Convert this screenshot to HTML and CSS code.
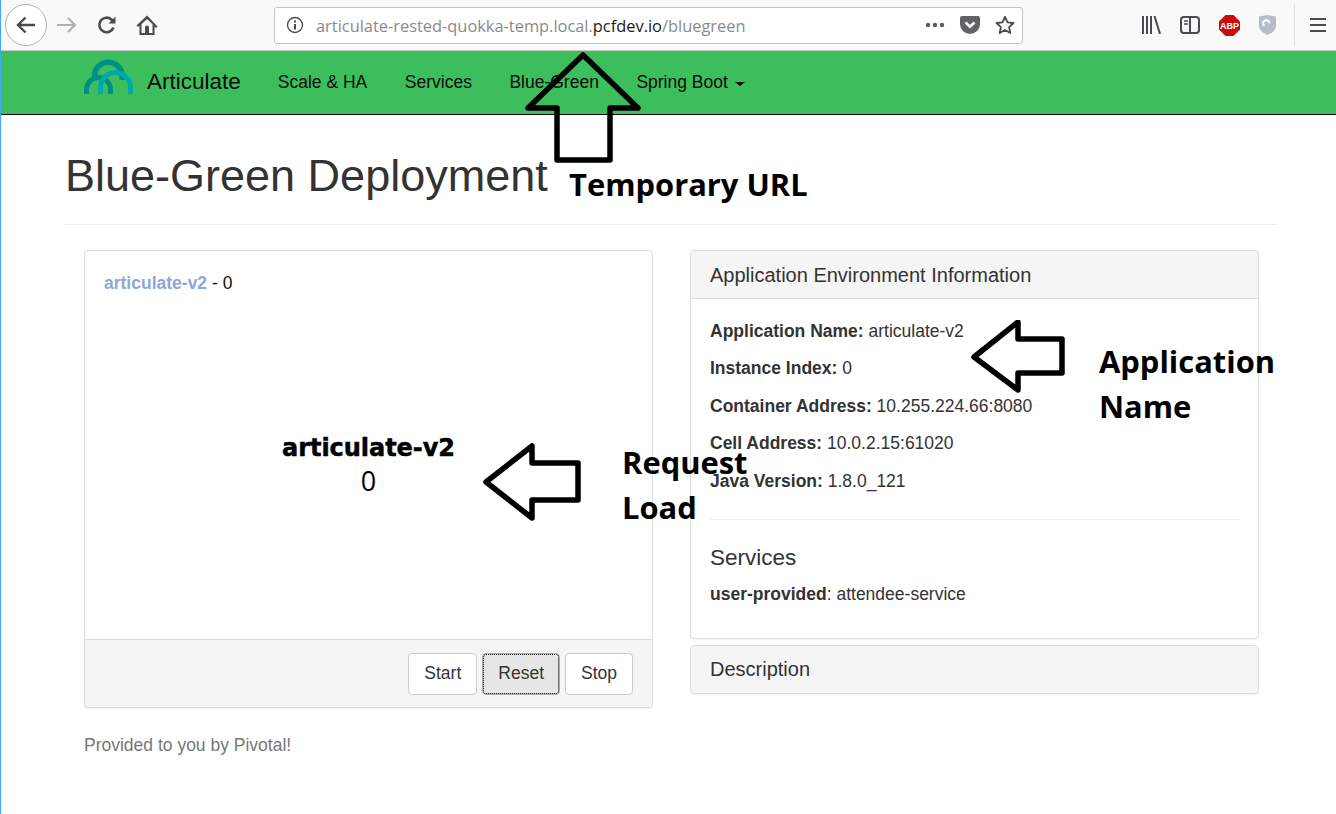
FILE: index.html
```html
<!DOCTYPE html>
<html lang="en">
<head>
  <meta charset="UTF-8" />
  <title>Articulate - Blue-Green Deployment</title>
  <link rel="stylesheet" href="styles.css">
</head>
<body>
  <div class="toolbar">
    <div class="tool-group">
      <div class="back-btn">
        <svg width="22" height="22" viewBox="0 0 22 22"><path d="M20 11H3M10.500 3.500L3 11l7.500 7.500" fill="none" stroke="#4a4a4f" stroke-width="2.400"/></svg>
      </div>
      <svg class="tool-forward" width="22" height="20" viewBox="0 0 22 20"><path d="M1 10h18M12 3l7 7-7 7" fill="none" stroke="#b1b1b3" stroke-width="2.200"/></svg>
      <svg class="tool-reload" width="22" height="22" viewBox="0 0 22 22"><path d="M17.500 13.500A7.300 7.300 0 1 1 15.500 5.500L18 8" fill="none" stroke="#4a4a4f" stroke-width="2.600"/><path d="M19.500 2.500V9.500H12.500Z" fill="#4a4a4f"/></svg>
      <svg class="tool-home" width="22" height="22" viewBox="0 0 22 22"><path fill-rule="evenodd" d="M11 1.500L.5 11.500l1.500 1.500 1.500-1.300V21h15v-8.300l1.500 1.300 1.500-1.500zM9 19v-5.500a2 2 0 0 1 4 0V19h3.500v-8.700L11 5 5.500 10.300V19z" fill="#4a4a4f"/></svg>
    </div>
    <div class="urlbar">
      <svg class="url-info" width="18" height="18" viewBox="0 0 18 18"><circle cx="9" cy="9" r="7.500" fill="none" stroke="#4a4a4f" stroke-width="1.300"/><path d="M8 8h2v5.500H8zM8 4.500h2v2H8z" fill="#4a4a4f"/></svg>
      <span class="url-text">articulate-rested-quokka-temp.local.<span class="url-domain">pcfdev.io</span>/bluegreen</span>
      <span class="url-actions">
        <svg width="20" height="6" viewBox="0 0 20 6"><circle cx="3" cy="3" r="2.200" fill="#5b5b5f"/><circle cx="10" cy="3" r="2.200" fill="#5b5b5f"/><circle cx="17" cy="3" r="2.200" fill="#5b5b5f"/></svg>
        <svg width="20" height="18" viewBox="0 0 20 18"><path d="M2 0h16a2 2 0 0 1 2 2v6a10 10 0 0 1-20 0V2a2 2 0 0 1 2-2z" fill="#636366"/><path d="M5.500 6.500L10 10.800l4.500-4.300" fill="none" stroke="#fff" stroke-width="2.600"/></svg>
        <svg width="20" height="20" viewBox="0 0 20 20"><path d="M10 1.800l2.500 5.500 6 .7-4.400 4.100 1.200 5.900-5.300-3-5.300 3 1.200-5.900L1.500 8l6-.7z" fill="none" stroke="#4a4a4f" stroke-width="1.800" stroke-linejoin="round"/></svg>
      </span>
    </div>
    <div class="tool-right">
      <svg width="20" height="18" viewBox="0 0 20 18"><path d="M2 0v18M6 0v18M10 0v18M13.500 0L19 18" fill="none" stroke="#4a4a4f" stroke-width="2"/></svg>
      <svg width="20" height="18" viewBox="0 0 20 18"><rect x="1" y="1" width="18" height="16" rx="3" fill="none" stroke="#4a4a4f" stroke-width="2"/><path d="M10 1v16" stroke="#4a4a4f" stroke-width="2"/><path d="M4 5h4M4 8h4" stroke="#4a4a4f" stroke-width="1.500"/></svg>
      <svg width="21" height="21" viewBox="0 0 21 21"><path d="M6.500 0h8L21 6.500v8L14.500 21h-8L0 14.500v-8z" fill="#c70d0d"/><text x="10.500" y="14" class="abp-text" text-anchor="middle">ABP</text></svg>
      <svg width="17" height="20" viewBox="0 0 17 20"><path d="M0 1.500L8.500 0 17 1.500V11c0 4-4 7-8.500 9C4 18 0 15 0 11z" fill="#b6bcc8"/><path d="M5.500 11a3.200 3.200 0 1 1 5 -2.600" fill="none" stroke="#fff" stroke-width="2"/></svg>
      <span class="tool-sep"></span>
      <svg width="16" height="16" viewBox="0 0 16 16"><path d="M0 2h16M0 8h16M0 14h16" stroke="#4a4a4f" stroke-width="2"/></svg>
    </div>
  </div>

  <nav class="navbar">
    <a class="brand" href="#">
      <svg class="brand-logo" width="50" height="37" viewBox="0 0 50 37">
        <path d="M10.500 21v-3a13.800 13.800 0 0 1 27.600 0v4" fill="none" stroke="#008f85" stroke-width="5.500"/>
        <path d="M2.500 36v-4.500a12 12 0 0 1 24 0V36" fill="none" stroke="#008f85" stroke-width="5"/>
        <path d="M16.500 36v-6.500a15 15 0 0 1 30 0V36" fill="none" stroke="#00aaa6" stroke-width="5"/>
      </svg>
      <span>Articulate</span>
    </a>
    <ul class="nav-links">
      <li>Scale &amp; HA</li>
      <li>Services</li>
      <li>Blue-Green</li>
      <li>Spring Boot <span class="caret"></span></li>
    </ul>
  </nav>

  <main class="content">
    <h1 class="page-title">Blue-Green Deployment</h1>
    <div class="columns">
      <div class="col-left">
        <section class="panel load-panel">
          <div class="load-body">
            <p class="legend"><span class="legend-name">articulate-v2</span> - 0</p>
            <div class="chart-label">
              <strong>articulate-v2</strong>
              <span>0</span>
            </div>
          </div>
          <div class="load-footer">
            <button type="button" class="btn">Start</button>
            <button type="button" class="btn btn-active">Reset</button>
            <button type="button" class="btn">Stop</button>
          </div>
        </section>
        <p class="provided">Provided to you by Pivotal!</p>
      </div>
      <div class="col-right">
        <section class="panel">
          <h3 class="panel-heading">Application Environment Information</h3>
          <div class="panel-body">
            <p><strong>Application Name:</strong> articulate-v2</p>
            <p><strong>Instance Index:</strong> 0</p>
            <p><strong>Container Address:</strong> 10.255.224.66:8080</p>
            <p><strong>Cell Address:</strong> 10.0.2.15:61020</p>
            <p><strong>Java Version:</strong> 1.8.0_121</p>
            <hr class="divider">
            <h4 class="services-title">Services</h4>
            <p><strong>user-provided</strong>: attendee-service</p>
          </div>
        </section>
        <section class="panel">
          <h3 class="panel-heading panel-heading-only">Description</h3>
        </section>
      </div>
    </div>
  </main>

  <!-- annotations drawn on top of the screenshot -->
  <svg class="arrow arrow-up" width="116" height="112" viewBox="0 0 116 112"><path d="M3 56L58 3l55 53H85v52H32V56z" fill="none" stroke="#000" stroke-width="5.500" stroke-linejoin="round"/></svg>
  <svg class="arrow arrow-name" width="96" height="74" viewBox="0 0 96 74"><path d="M3 37L47 2v17h44v34H47v17z" fill="none" stroke="#000" stroke-width="5.500" stroke-linejoin="round"/></svg>
  <svg class="arrow arrow-load" width="100" height="78" viewBox="0 0 100 78"><path d="M3 39L49 3v17h46v37H49v18z" fill="none" stroke="#000" stroke-width="5.500" stroke-linejoin="round"/></svg>
  <div class="note note-url">Temporary URL</div>
  <div class="note note-name">Application<br>Name</div>
  <div class="note note-load">Request<br>Load</div>
</body>
</html>
```

FILE: styles.css
```css
* {
  box-sizing: border-box;
}

html, body {
  margin: 0;
  height: 100%;
}

body {
  position: relative;
  overflow: hidden;
  font-family: "Liberation Sans", Arial, sans-serif;
  font-size: 17.500px;
  line-height: 1.43;
  color: #333;
  background: #fff;
  border-left: 1px solid #3fa9f5;
}

/* browser chrome */
.toolbar {
  height: 51px;
  display: flex;
  align-items: center;
  background: #f9f9fa;
  border-bottom: 1px solid #ccc;
}

.tool-group {
  width: 273px;
  display: flex;
  align-items: center;
  padding-left: 4px;
}

.back-btn {
  width: 42px;
  height: 42px;
  border: 1px solid #b1b1b3;
  border-radius: 50%;
  background: #fff;
  display: flex;
  align-items: center;
  justify-content: center;
}

.tool-forward {
  margin-left: 9px;
}

.tool-reload {
  margin-left: 18px;
}

.tool-home {
  margin-left: 18px;
}

.urlbar {
  width: 749px;
  height: 37px;
  display: flex;
  align-items: center;
  padding: 0 7px 0 11px;
  background: #fff;
  border: 1px solid #c4c4c4;
  border-radius: 3px;
}

.url-text {
  margin: 1px 0 0 12px;
  font-family: "Open Sans", sans-serif;
  font-size: 16.400px;
  color: #8a8a8e;
  white-space: nowrap;
}

.url-domain {
  color: #1a1a1a;
}

.url-actions {
  margin-left: auto;
  display: flex;
  align-items: center;
  gap: 15px;
}

.tool-right {
  flex: 1;
  display: flex;
  align-items: center;
  padding-left: 118px;
  gap: 19px;
}

.tool-sep {
  width: 1px;
  height: 42px;
  margin: 0 -4px 0 -1px;
  background: #e1e1e2;
}

.abp-text {
  font-family: "Liberation Sans", sans-serif;
  font-size: 9px;
  font-weight: 700;
  fill: #fff;
}

/* navbar */
.navbar {
  height: 64px;
  display: flex;
  align-items: center;
  padding-left: 83px;
  background: #3dbe5c;
  border-bottom: 1px solid #000;
  color: #0a0a0a;
}

.brand {
  display: flex;
  align-items: center;
  color: inherit;
  text-decoration: none;
  font-size: 22.500px;
}

.brand-logo {
  margin: 0 13px 12px 0;
}

.nav-links {
  display: flex;
  gap: 37.500px;
  list-style: none;
  margin: 1px 0 0 37px;
  padding: 0;
  font-size: 17.500px;
}

.caret {
  display: inline-block;
  width: 0;
  height: 0;
  margin-left: 2px;
  vertical-align: middle;
  border-top: 4px solid #0a0a0a;
  border-left: 5px solid transparent;
  border-right: 5px solid transparent;
}

/* page */
.content {
  width: 1213px;
  margin-left: 64px;
}

.page-title {
  margin: 0 0 25px;
  padding: 34px 0 21px;
  font-size: 45px;
  font-weight: 400;
  line-height: 54px;
  border-bottom: 1px solid #eee;
}

.columns {
  display: grid;
  grid-template-columns: 569px 569px;
  gap: 37px;
  padding-left: 19px;
}

.panel {
  margin-bottom: 6px;
  background: #fff;
  border: 1px solid #ddd;
  border-radius: 4px;
  box-shadow: 0 1px 1px rgba(0, 0, 0, 0.05);
  overflow: hidden;
}

.load-panel {
  height: 458px;
  display: flex;
  flex-direction: column;
  margin-bottom: 25px;
}

.load-body {
  flex: 1;
  position: relative;
  padding: 20px 19px;
}

.legend {
  margin: 0;
  color: #111;
}

.legend-name {
  font-weight: 700;
  color: #8ea6d8;
}

.chart-label {
  position: absolute;
  left: 0;
  right: 0;
  top: 182px;
  display: flex;
  flex-direction: column;
  align-items: center;
  color: #000;
}

.chart-label strong {
  font-family: "DejaVu Sans", sans-serif;
  font-size: 24px;
  line-height: 30px;
  letter-spacing: -0.05px;
  -webkit-text-stroke: 0.5px #000;
}

.chart-label span {
  font-family: "Open Sans", sans-serif;
  font-size: 27px;
  line-height: 36px;
}

.load-footer {
  height: 68px;
  display: flex;
  justify-content: flex-end;
  align-items: center;
  gap: 5px;
  padding: 0 19px;
  background: #f5f5f5;
  border-top: 1px solid #ddd;
}

.btn {
  height: 42px;
  padding: 0 15px;
  font: inherit;
  color: #333;
  background: #fff;
  border: 1px solid #ccc;
  border-radius: 4px;
}

.btn-active {
  background: #e6e6e6;
  border-color: #adadad;
  outline: 1px dotted #000;
  outline-offset: -2px;
}

.provided {
  margin: 0;
  color: #777;
}

.panel-heading {
  margin: 0;
  height: 48px;
  padding: 10px 19px;
  font-size: 20px;
  font-weight: 400;
  line-height: 1.4;
  background: #f5f5f5;
  border-bottom: 1px solid #ddd;
}

.panel-heading-only {
  height: 47px;
  padding-top: 9px;
  border-bottom: 0;
}

.panel-body {
  height: 339px;
  padding: 20.500px 19px;
}

.panel-body p {
  margin: 0 0 14.500px;
  line-height: 23px;
}

.divider {
  margin: 26px 0 23px;
  border: 0;
  border-top: 1px solid #eee;
}

.services-title {
  margin: 0 0 10px;
  font-size: 22.500px;
  font-weight: 400;
  line-height: 30px;
}

/* annotations */
.arrow {
  position: absolute;
}

.arrow-up {
  left: 524px;
  top: 52px;
}

.arrow-name {
  left: 970px;
  top: 320px;
}

.arrow-load {
  left: 482px;
  top: 443px;
}

.note {
  position: absolute;
  font-family: "Open Sans", sans-serif;
  font-size: 30.900px;
  font-weight: 700;
  line-height: 45px;
  color: #000;
  white-space: nowrap;
}

.note-url {
  left: 568px;
  top: 162px;
}

.note-name {
  left: 1098px;
  top: 339px;
}

.note-load {
  left: 621px;
  top: 440px;
}
```
